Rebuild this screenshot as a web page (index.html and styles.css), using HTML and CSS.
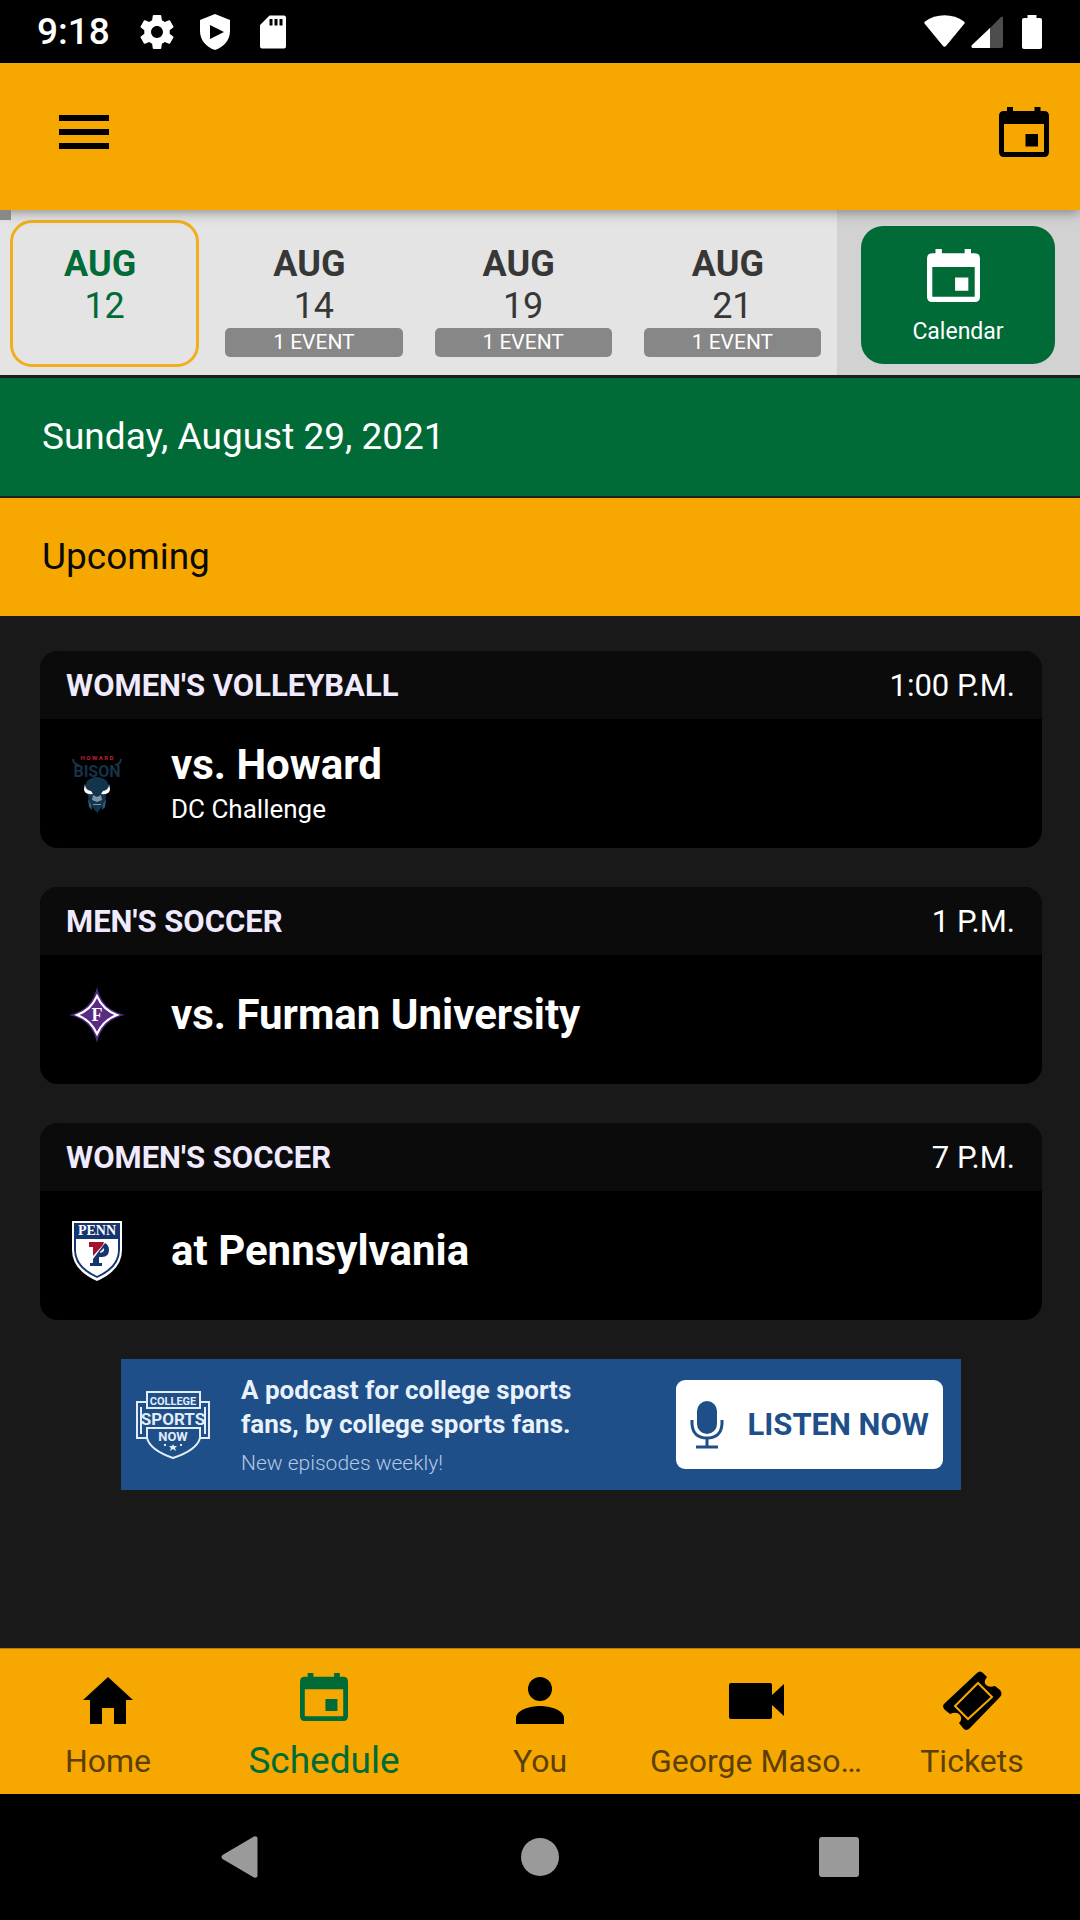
FILE: index.html
```html
<!DOCTYPE html>
<html lang="en">

<head>
  <meta charset="utf-8">
  <meta name="viewport" content="width=device-width, initial-scale=1">
  <title>Schedule</title>
  <link rel="stylesheet" href="styles.css">
</head>

<body>
  <svg class="defs" aria-hidden="true">
    <symbol id="calendar" viewBox="0 0 50 50">
      <path fill-rule="evenodd" d="M8 0h6v4h21.500V0h6v4H45q5 0 5 5v36q0 5-5 5H5q-5 0-5-5V9q0-5 5-5h3zM5 17v28h40V17zM26.500 27H39v12.500H26.500z"/>
    </symbol>
  </svg>

  <!-- status bar -->
  <div class="status">
    <span class="clock">9:18</span>
    <svg class="status-icon" viewBox="2 2 20 20"><path fill="#fff" d="M19.430 12.980c.04-.32.07-.64.07-.98s-.03-.66-.07-.98l2.110-1.650c.19-.15.24-.42.12-.64l-2-3.460c-.12-.22-.39-.3-.61-.22l-2.490 1c-.52-.4-1.080-.73-1.690-.98l-.38-2.650C14.460 2.180 14.250 2 14 2h-4c-.25 0-.46.18-.49.42l-.38 2.650c-.61.25-1.170.59-1.690.98l-2.490-1c-.23-.09-.49 0-.61.22l-2 3.460c-.13.22-.07.49.12.64l2.110 1.650c-.04.32-.07.65-.07.98s.03.66.07.98l-2.110 1.650c-.19.15-.24.42-.12.64l2 3.460c.12.22.39.3.61.22l2.490-1c.52.4 1.080.73 1.690.98l.38 2.650c.03.24.24.42.49.42h4c.25 0 .46-.18.49-.42l.38-2.650c.61-.25 1.170-.59 1.690-.98l2.490 1c.23.09.49 0 .61-.22l2-3.460c.12-.22.07-.49-.12-.64l-2.110-1.650zM12 15.500c-1.930 0-3.500-1.570-3.500-3.500s1.570-3.500 3.500-3.500 3.500 1.570 3.500 3.500-1.570 3.500-3.500 3.500z"/></svg>
    <svg class="status-icon shield" viewBox="0 0 30 36"><path fill="#fff" fill-rule="evenodd" d="M15 0l15 6v11c0 9-6 16-15 19C6 33 0 26 0 17V6zM10 11v14l14-7z"/></svg>
    <svg class="status-icon card-icon" viewBox="0 0 26 33"><path fill="#fff" fill-rule="evenodd" d="M9.500 0H24q2 0 2 2v29q0 2-2 2H2q-2 0-2-2V9.500zM9.500 3.500v6.500h3V3.500zM14.500 3.500v6.500h3V3.500zM19.500 3.500v6.500h3V3.500z"/></svg>
    <div class="status-right">
      <svg width="41" height="34" viewBox="0 0 41 34"><path fill="#fff" d="M.5 8.500Q0 7.500 1 6.500C12-2 29-2 40 6.500q1 1 .5 2L22 31q-1.500 1.500-3 0z"/></svg>
      <svg width="32" height="34" viewBox="0 0 32 34"><path fill="#4d4d4d" d="M18 14L30 2q2-1 2 1v28q0 2-2 2H18z"/><path fill="#fff" d="M19 13v20H1.500Q-.5 32 1 30z"/></svg>
      <svg class="battery" width="20" height="34" viewBox="0 0 20 34"><path fill="#fff" d="M5.500 0h9v3H18q2 0 2 2v27q0 2-2 2H2q-2 0-2-2V5q0-2 2-2h3.500z"/></svg>
    </div>
  </div>

  <header class="appbar">
    <button class="icon-btn" type="button" aria-label="Menu">
      <svg width="50" height="34" viewBox="0 0 50 34"><path d="M0 0h50v6H0zM0 14h50v6H0zM0 28h50v6H0z"/></svg>
    </button>
    <button class="icon-btn" type="button" aria-label="Calendar">
      <svg width="50" height="50"><use href="#calendar"/></svg>
    </button>
  </header>

  <!-- date picker -->
  <div class="dates">
    <span class="scroll-mark"></span>
    <div class="days">
      <button class="day selected" type="button"><b>AUG&nbsp;</b><span>12</span></button>
      <button class="day" type="button"><b>AUG&nbsp;</b><span>14</span><span class="pill">1 EVENT</span></button>
      <button class="day" type="button"><b>AUG&nbsp;</b><span>19</span><span class="pill">1 EVENT</span></button>
      <button class="day" type="button"><b>AUG&nbsp;</b><span>21</span><span class="pill">1 EVENT</span></button>
    </div>
    <div class="picker">
      <button class="calendar-btn" type="button">
        <span class="calendar-icon"><svg width="53" height="53"><use href="#calendar"/></svg>&nbsp;</span>
        <span>Calendar</span>
      </button>
    </div>
  </div>

  <h1 class="bar green">Sunday, August 29, 2021</h1>
  <h2 class="bar gold">Upcoming</h2>

  <main>
    <article class="event">
      <header><h3>WOMEN'S VOLLEYBALL</h3><time>1:00 P.M.</time></header>
      <div class="event-body">
        <svg class="logo" viewBox="0 0 60 60">
          <text x="30" y="6" class="howard">H O W A R D</text>
          <path fill="none" stroke="#173247" stroke-width="2" d="M6 5q0 5 6 6M54 5q0 5-6 6"/>
          <text x="30" y="23" class="bison">BISON</text>
          <path fill="#12344d" d="M20 27q10-8 20 0l3 8-4 6-1 9-4 4-4 5-4-5-4-4-1-9-4-6z"/>
          <path fill="#fff" d="M18 30q0 6 6 7l2 3q-9 1-9-5zM42 30q0 6-6 7l-2 3q9 1 9-5z"/>
          <path fill="#8294a3" d="M26 41l4 2 4-2 1 5-5 2-5-2zM26 50h8v1h-8z"/>
          <path fill="#335b78" d="M21 45l3 5 1 6-3-3zM39 45l-3 5-1 6 3-3z"/>
        </svg>
        <div>
          <h4>vs. Howard</h4>
          <p>DC Challenge</p>
        </div>
      </div>
    </article>

    <article class="event">
      <header><h3>MEN'S SOCCER</h3><time>1 P.M.</time></header>
      <div class="event-body single">
        <svg class="logo" viewBox="0 0 60 60">
          <path fill="#4b2a82" d="M30 2Q35 25 58 30 35 35 30 58 25 35 2 30 25 25 30 2z"/>
          <path fill="#582c83" stroke="#fff" stroke-width="2" d="M30 11Q36 25 50 30 36 35 30 49 24 35 10 30 24 25 30 11z"/>
          <text x="30" y="36" class="furman">F</text>
        </svg>
        <h4>vs. Furman University</h4>
      </div>
    </article>

    <article class="event">
      <header><h3>WOMEN'S SOCCER</h3><time>7 P.M.</time></header>
      <div class="event-body single">
        <svg class="logo" viewBox="0 0 60 60">
          <path fill="#fff" d="M5 0h50v29q0 20-25 31Q5 49 5 29z"/>
          <path fill="#16356f" d="M7 2h46v27q0 18-23 28Q7 47 7 29z"/>
          <path fill="#fff" d="M9 18h42v11q0 16-21 26Q9 45 9 29z"/>
          <text x="30" y="14" class="penn">PENN</text>
          <path fill="#16356f" d="M38 22q4 2 4 7 0 7-7 7h-3v6h3v3H23v-3h3v-4z"/>
          <path fill="#fff" d="M33 31l4-4q1 4-4 5z"/>
          <path fill="#a3132c" d="M22 21h15l-1 3-10 11v-9h-4z"/>
        </svg>
        <h4>at Pennsylvania</h4>
      </div>
    </article>

    <!-- podcast ad -->
    <aside class="ad">
      <svg class="ad-logo" viewBox="0 0 74 70">
        <path fill="#1e4f89" stroke="#e3edf8" stroke-width="2" d="M11 2h53v10h9v36h-9q-3 12-27 20Q14 60 11 48H1V12h10z"/>
        <path fill="none" stroke="#e3edf8" stroke-width="2" d="M11 12v6h53v-6M5 17v27M69 17v27M11 48V38h53v10"/>
        <text x="37" y="15" class="badge-small">COLLEGE</text>
        <text x="37" y="35" class="badge-big">SPORTS</text>
        <text x="37" y="51" class="badge-mid">NOW</text>
        <path fill="#e3edf8" d="M37 54l1 2h3l-2 2 1 3-3-2-3 2 1-3-2-2h3zM28 54h2v2h-2zM44 54h2v2h-2z"/>
      </svg>
      <div class="ad-text">
        <strong>A podcast for college sports<br>fans, by college sports fans.</strong>
        <small>New episodes weekly!</small>
      </div>
      <a class="listen" href="#">
        <svg width="34" height="48" viewBox="0 0 34 48"><rect x="7" width="20" height="33" rx="10" fill="#1e4f89"/><path fill="none" stroke="#1e4f89" stroke-width="3" d="M2 19v4q1 14 15 14 14 0 15-14v-4M17 37v9M6 46h22"/></svg>
        LISTEN NOW
      </a>
    </aside>
  </main>

  <nav class="tabs">
    <a href="#">
      <svg width="60" height="60" viewBox="0 0 60 60"><path d="M30 6l25 23h-7v24H36V37H24v16H12V29H5z"/></svg>
      <span>Home</span>
    </a>
    <a href="#" class="active">
      <svg width="48" height="48"><use href="#calendar"/></svg>
      <span>Schedule</span>
    </a>
    <a href="#">
      <svg width="60" height="60" viewBox="0 0 60 60"><circle cx="30" cy="18" r="12"/><path d="M6 53v-6c0-8 14-12 24-12s24 4 24 12v6z"/></svg>
      <span>You</span>
    </a>
    <a href="#">
      <svg width="60" height="60" viewBox="0 0 60 60"><path d="M5 12h39q2 0 2 2v10l12-11v32L46 34v12q0 2-2 2H5q-2 0-2-2V14q0-2 2-2z"/></svg>
      <span>George Maso…</span>
    </a>
    <a href="#">
      <svg width="60" height="60" viewBox="0 0 60 60">
        <path d="M35 2q3-3 6 0l4 4q-4 5-1 8t9 1l5 4q3 4 0 7L28 57q-4 4-7 0l-4-5q4-4 1-8t-10-1l-5-4q-4-4 0-7z"/>
        <path fill="none" stroke="#f7a800" stroke-width="2" d="M36 12l14 14-24 22-13-13z"/>
      </svg>
      <span>Tickets</span>
    </a>
  </nav>

  <!-- system buttons -->
  <div class="system">
    <button type="button" aria-label="Back"><svg width="40" height="44" viewBox="0 0 40 44"><path fill="#9a9a9a" d="M1.500 20L33 1.500q3-1 3.500 1.500v38q-.5 2.500-3.500 1.500L1.500 24q-2-2 0-4z"/></svg></button>
    <button type="button" aria-label="Home"><svg width="38" height="38"><circle cx="19" cy="19" r="19" fill="#9a9a9a"/></svg></button>
    <button type="button" aria-label="Recent apps"><svg width="40" height="40"><rect width="40" height="40" rx="3" fill="#9a9a9a"/></svg></button>
  </div>
</body>

</html>
```

FILE: styles.css
```css
* {
  box-sizing: border-box;
}

body {
  margin: 0;
  min-height: 100vh;
  display: flex;
  flex-direction: column;
  background-color: #191919;
  color: #fff;
  font-family: Roboto, "Liberation Sans", sans-serif;
}

h1, h2, h3, h4, p {
  margin: 0;
}

button {
  border: 0;
  padding: 0;
  background: none;
  color: inherit;
  font: inherit;
}

a {
  color: inherit;
  text-decoration: none;
}

svg {
  flex: none;
}

.defs {
  position: absolute;
  width: 0;
  height: 0;
}

/* status bar */
.status {
  display: flex;
  align-items: center;
  height: 63px;
  padding: 0 38px 0 37px;
  background-color: #000;
}

.clock {
  font-size: 37px;
  font-weight: 500;
  line-height: 44px;
  margin-right: 30px;
}

.status-icon {
  width: 34px;
  height: 34px;
}

.shield {
  width: 30px;
  height: 36px;
  margin-left: 26px;
}

.card-icon {
  width: 26px;
  margin-left: 30px;
}

.status-right {
  display: flex;
  gap: 6px;
  margin-left: auto;
}

.battery {
  margin-left: 13px;
}

/* app bar */
.appbar {
  position: relative;
  z-index: 1;
  display: flex;
  justify-content: space-between;
  align-items: center;
  height: 147px;
  padding: 0 31px 10px 59px;
  background-color: #f7a800;
  box-shadow: 0 2px 12px rgba(0, 0, 0, 0.4);
}

.icon-btn {
  display: flex;
}

/* dates */
.dates {
  position: relative;
  display: flex;
  height: 168px;
  border-bottom: 3px solid #1a1f1c;
  background-color: #e4e4e4;
  color: #373737;
}

.scroll-mark {
  position: absolute;
  z-index: 2;
  left: 0;
  top: 0;
  width: 11px;
  height: 10px;
  background-color: #888;
}

.days {
  flex: 1;
  display: grid;
  grid-template-columns: repeat(4, 1fr);
}

.day {
  display: flex;
  flex-direction: column;
  align-items: center;
  margin: 10px 10px 8px;
  padding: 20px 3px 0;
  border: 3px solid transparent;
  border-radius: 22px;
  font-size: 36px;
  line-height: 42px;
}

.selected {
  border-color: #f0ae1c;
  color: #006b37;
}

.pill {
  width: 100%;
  margin-top: 1px;
  border-radius: 5px;
  background-color: #878787;
  color: #fff;
  font-size: 21px;
  line-height: 29px;
}

.picker {
  width: 243px;
  padding: 16px 25px 11px 24px;
  background-color: #d2d2d2;
}

.calendar-btn {
  display: flex;
  flex-direction: column;
  align-items: center;
  width: 100%;
  height: 100%;
  padding-top: 23px;
  border-radius: 22px;
  background-color: #006b37;
  color: #fff;
  font-size: 23px;
  line-height: 28px;
}

.calendar-icon {
  font-size: 36px;
}

.calendar-btn svg {
  display: inline-block;
  vertical-align: top;
  margin-bottom: 16px;
}

.calendar-btn svg, .tabs .active svg {
  fill: currentColor;
}

.bar {
  padding: 0 42px;
  font-size: 37px;
  font-weight: 400;
  line-height: 118px;
}

.green {
  border-bottom: 2px solid #1a1f1c;
  background-color: #006b37;
}

.gold {
  background-color: #f7a800;
  color: #0a0a0a;
}

/* events */
main {
  flex: 1;
  display: flex;
  flex-direction: column;
  gap: 39px;
  padding: 35px 38px 35px 40px;
}

.event {
  border-radius: 18px;
  overflow: hidden;
  background-color: #000;
}

.event header {
  display: flex;
  justify-content: space-between;
  align-items: center;
  height: 68px;
  padding: 0 27px 0 26px;
  background-color: #0b0b0b;
}

.event h3 {
  color: #efeafd;
  font-size: 31px;
  font-weight: 700;
}

.event time {
  font-size: 31px;
}

.event-body {
  display: flex;
  align-items: center;
  gap: 44px;
  height: 129px;
  padding-left: 27px;
}

.single {
  padding-bottom: 10px;
}

.logo {
  width: 60px;
  height: 60px;
}

.event h4 {
  font-size: 42px;
  line-height: 50px;
}

.event p {
  font-size: 26px;
  line-height: 38px;
}

.logo text, .ad-logo text {
  fill: #fff;
  font-weight: 700;
  text-anchor: middle;
}

.logo .howard {
  fill: #c5202f;
  font-size: 6px;
}

.logo .bison {
  fill: #173247;
  font-size: 16px;
}

.logo .furman {
  font-family: "Liberation Serif", serif;
  font-size: 18px;
}

.logo .penn {
  font-family: "Liberation Serif", serif;
  font-size: 14px;
}

/* podcast ad */
.ad {
  display: flex;
  align-items: center;
  align-self: center;
  width: 840px;
  max-width: 100%;
  height: 131px;
  padding: 0 18px 0 15px;
  background-color: #1e4f89;
}

.ad-logo {
  width: 74px;
  height: 70px;
}

.ad-logo .badge-small {
  fill: #e3edf8;
  font-size: 11px;
}

.ad-logo .badge-big {
  fill: #e3edf8;
  font-size: 17px;
}

.ad-logo .badge-mid {
  fill: #e3edf8;
  font-size: 13px;
}

.ad-text {
  margin-left: 31px;
  padding-top: 8px;
  color: #e9f1fb;
}

.ad-text strong {
  display: block;
  font-size: 26px;
  line-height: 34px;
}

.ad-text small {
  display: block;
  color: #b4c8e0;
  font-size: 21px;
  font-weight: 300;
  line-height: 44px;
}

.listen {
  display: flex;
  align-items: center;
  gap: 23px;
  height: 89px;
  margin-left: auto;
  padding: 0 14px;
  border-radius: 9px;
  background-color: #fff;
  color: #1e4f89;
  font-size: 31px;
  font-weight: 700;
}

/* bottom tabs */
.tabs {
  display: grid;
  grid-template-columns: repeat(5, minmax(0, 1fr));
  height: 146px;
  border-top: 1px solid #b67c05;
  background-color: #f7a800;
  color: #5c3f05;
}

.tabs a {
  display: flex;
  flex-direction: column;
  align-items: center;
  justify-content: space-between;
  padding: 22px 0 13px;
  font-size: 32px;
  line-height: 40px;
  white-space: nowrap;
}

.tabs svg {
  fill: #000;
}

.tabs .active {
  padding-top: 24px;
  color: #006b37;
  font-size: 37px;
}

.system {
  display: grid;
  grid-template-columns: repeat(3, 299px);
  justify-content: center;
  place-items: center;
  height: 126px;
  background-color: #000;
}

.system button {
  display: flex;
}
```
